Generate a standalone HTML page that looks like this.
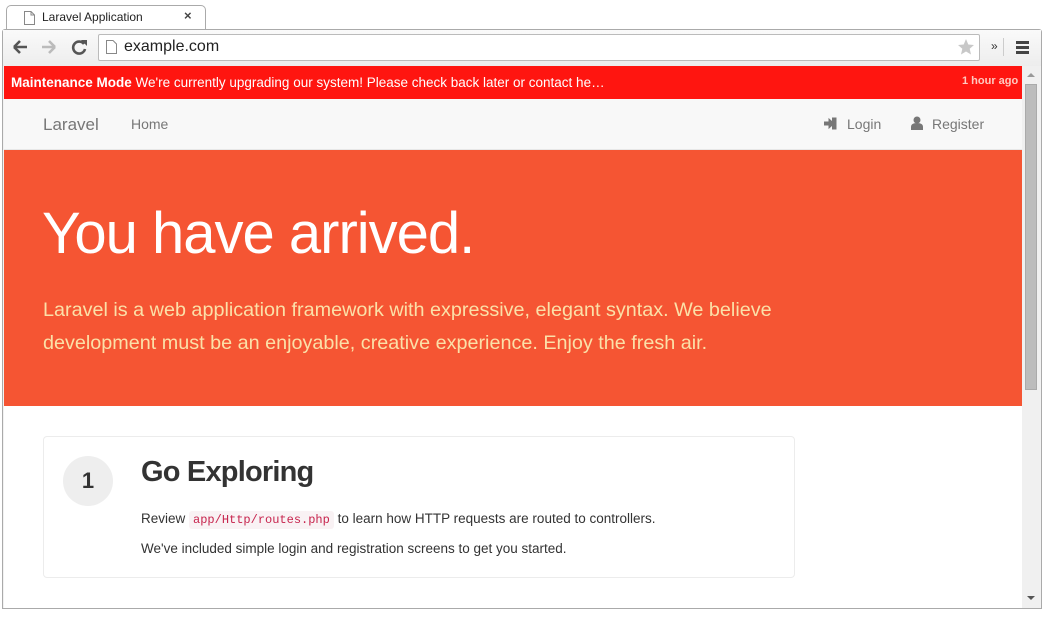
<!DOCTYPE html>
<html><head><style>
*{margin:0;padding:0;box-sizing:border-box}
body{width:1044px;height:620px;background:#fff;position:relative;overflow:hidden;font-family:"Liberation Sans",sans-serif}
.abs{position:absolute}
</style></head><body>
<!-- tab -->
<div class="abs" style="left:6px;top:5px;width:200px;height:26px;border:1px solid #aaa;border-bottom:none;border-radius:5px 5px 0 0;background:#fff"></div>
<svg class="abs" style="left:24px;top:11px" width="11" height="14"><path d="M0.5 0.5H7L10.5 4V13.5H0.5Z M7 0.5V4H10.5" fill="#fff" stroke="#888"/></svg>
<div class="abs" style="left:42px;top:10px;font-size:12px;color:#222">Laravel Application</div>
<div class="abs" style="left:184px;top:8px;font-size:13px;font-weight:bold;color:#444">×</div>
<!-- window -->
<div class="abs" style="left:2px;top:29px;width:1040px;height:580px;border:1px solid #aaa;border-radius:3px 3px 0 0;background:#f2f2f2"></div>
<div class="abs" style="left:3px;top:30px;width:1038px;height:36px;background:linear-gradient(#fafafa,#ededed)"></div>
<svg class="abs" style="left:12px;top:39px" width="80" height="16">
<path d="M2 8H15M2 8L8 2M2 8L8 14" stroke="#555" stroke-width="2.6" fill="none"/>
<path d="M30 8H43M43 8L37 2M43 8L37 14" stroke="#bbb" stroke-width="2.6" fill="none"/>
<path d="M72 5A6 6 0 1 0 73 10" stroke="#555" stroke-width="2.6" fill="none"/><path d="M69 1L75 1L75 7Z" fill="#555"/>
</svg>
<div class="abs" style="left:98px;top:34px;width:882px;height:27px;border:1px solid #bbb;border-radius:2px;background:#fff"></div>
<svg class="abs" style="left:106px;top:40px" width="11" height="14"><path d="M0.5 0.5H7L10.5 4V13.5H0.5Z" fill="#fff" stroke="#888"/></svg>
<div class="abs" style="left:124px;top:38px;font-size:16px;color:#222">example.com</div>
<svg class="abs" style="left:957px;top:38px" width="18" height="18"><path d="M9 1L11.3 6.5L17 7L12.7 10.8L14 16.5L9 13.5L4 16.5L5.3 10.8L1 7L6.7 6.5Z" fill="#c8c8c8"/></svg>
<div class="abs" style="left:991px;top:39px;font-size:12px;color:#333">»</div>
<div class="abs" style="left:1003px;top:38px;width:1px;height:18px;background:#ccc"></div>
<div class="abs" style="left:1016px;top:41px;width:13px;height:3px;background:#444;box-shadow:0 5px #444,0 10px #444"></div>
<!-- page -->
<div class="abs" style="left:4px;top:66px;width:1018px;height:542px;background:#fff"></div>
<div class="abs" style="left:4px;top:66px;width:1018px;height:33px;background:#ff1510;color:#fff;font-size:13.5px;line-height:33px;padding-left:7px"><b>Maintenance Mode</b> We're currently upgrading our system! Please check back later or contact he…</div>
<div class="abs" style="left:962px;top:75px;font-size:11px;color:#ffc9c0;font-weight:bold">1 hour ago</div>
<div class="abs" style="left:4px;top:99px;width:1018px;height:51px;background:#f8f8f8;border-bottom:1px solid #e7e7e7"></div>
<div class="abs" style="left:43px;top:115px;font-size:17px;color:#777">Laravel</div>
<div class="abs" style="left:131px;top:116px;font-size:14px;color:#777">Home</div>
<svg class="abs" style="left:824px;top:117px" width="14" height="13"><path d="M0 5H5V2L10 6.5L5 11V8H0Z M8 1H12V12H8" fill="#777" stroke="#777" stroke-width="1"/></svg>
<div class="abs" style="left:847px;top:116px;font-size:14px;color:#777">Login</div>
<svg class="abs" style="left:911px;top:116px" width="12" height="14"><circle cx="6" cy="4" r="3.5" fill="#777"/><path d="M0 14V11Q0 7 6 7Q12 7 12 11V14Z" fill="#777"/></svg>
<div class="abs" style="left:932px;top:116px;font-size:14px;color:#777">Register</div>
<div class="abs" style="left:4px;top:150px;width:1018px;height:256px;background:#f55533"></div>
<div class="abs" style="left:42px;top:200px;font-size:58px;font-weight:300;color:#fff;letter-spacing:-1px">You have arrived.</div>
<div class="abs" style="left:43px;top:294px;width:780px;font-size:19.8px;line-height:33px;color:#fbe0a8">Laravel is a web application framework with expressive, elegant syntax. We believe development must be an enjoyable, creative experience. Enjoy the fresh air.</div>
<div class="abs" style="left:43px;top:436px;width:752px;height:142px;border:1px solid #ececec;border-radius:4px"></div>
<div class="abs" style="left:63px;top:456px;width:50px;height:50px;border-radius:50%;background:#eee;text-align:center;line-height:50px;font-size:22px;font-weight:bold;color:#333">1</div>
<div class="abs" style="left:141px;top:456px;font-size:29px;font-weight:bold;color:#333;letter-spacing:-0.8px">Go Exploring</div>
<div class="abs" style="left:141px;top:511px;font-size:13.5px;color:#333">Review <span style="font-family:'Liberation Mono',monospace;font-size:12px;color:#c7254e;background:#f9f2f4;padding:2px 4px;border-radius:3px">app/Http/routes.php</span> to learn how HTTP requests are routed to controllers.</div>
<div class="abs" style="left:141px;top:541px;font-size:13.5px;color:#333">We've included simple login and registration screens to get you started.</div>
<!-- scrollbar -->
<div class="abs" style="left:1022px;top:66px;width:18px;height:542px;background:#f0f0f0"></div>
<div class="abs" style="left:1025px;top:84px;width:12px;height:306px;background:#bcbcbc;border:1px solid #aaa"></div>
<div class="abs" style="left:1027px;top:73px;width:0;height:0;border:4px solid transparent;border-bottom-color:#999;border-top:none"></div>
<div class="abs" style="left:1027px;top:596px;width:0;height:0;border:4px solid transparent;border-top-color:#555;border-bottom:none"></div>
</body></html>
